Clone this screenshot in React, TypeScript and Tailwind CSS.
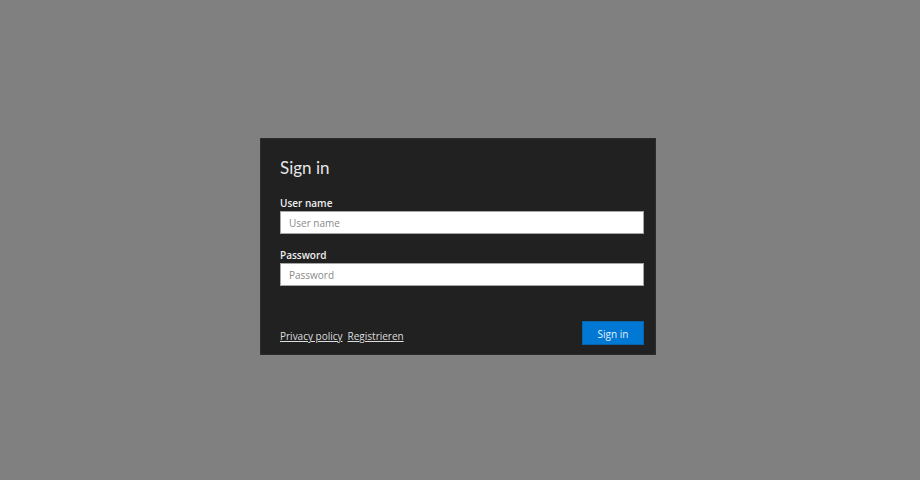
export default function App() {
  const font = { fontFamily: '"Open Sans", "Noto Sans", sans-serif' };
  const title = { fontFamily: 'Lato, "Noto Sans", sans-serif' };
  return (
    <div className="w-[920px] h-[480px] bg-[#808080] flex items-start justify-center pt-[138px]" style={font}>
      <div className="mr-[4px] w-[396px] h-[217px] bg-[#212121] border border-[#2c2c2c] pl-[19px] pr-[11px] pt-[18px] pb-[9px] flex flex-col">
        <h1 className="text-[17px] leading-[22px] text-[#e6e6e6] font-normal" style={title}>Sign in</h1>
        <label className="mt-[18px] text-[10px] leading-[13px] font-semibold text-[#eeeeee]">User name</label>
        <input
          className="mt-[1px] w-[364px] h-[23px] bg-white border border-[#a6a6a6] px-[8px] text-[10px] text-[#333] placeholder:text-[#8a8a8a] outline-none"
          placeholder="User name"
        />
        <label className="mt-[15px] text-[10px] leading-[13px] font-semibold text-[#eeeeee]">Password</label>
        <input
          type="password"
          className="mt-[1px] w-[364px] h-[23px] bg-white border border-[#a6a6a6] px-[8px] text-[10px] text-[#333] placeholder:text-[#8a8a8a] outline-none"
          placeholder="Password"
        />
        <div className="mt-auto flex items-end justify-between w-[364px]">
          <div className="flex gap-[5px] text-[10px] leading-[14px] text-[#dddddd] pb-[2px]">
            <a className="underline cursor-pointer">Privacy policy</a>
            <a className="underline cursor-pointer">Registrieren</a>
          </div>
          <button className="w-[62px] h-[24px] bg-[#0078d4] border border-[#0a63ad] text-[10px] leading-[20px] pt-[1px] text-[#e8eef8]">Sign in</button>
        </div>
      </div>
    </div>
  );
}
